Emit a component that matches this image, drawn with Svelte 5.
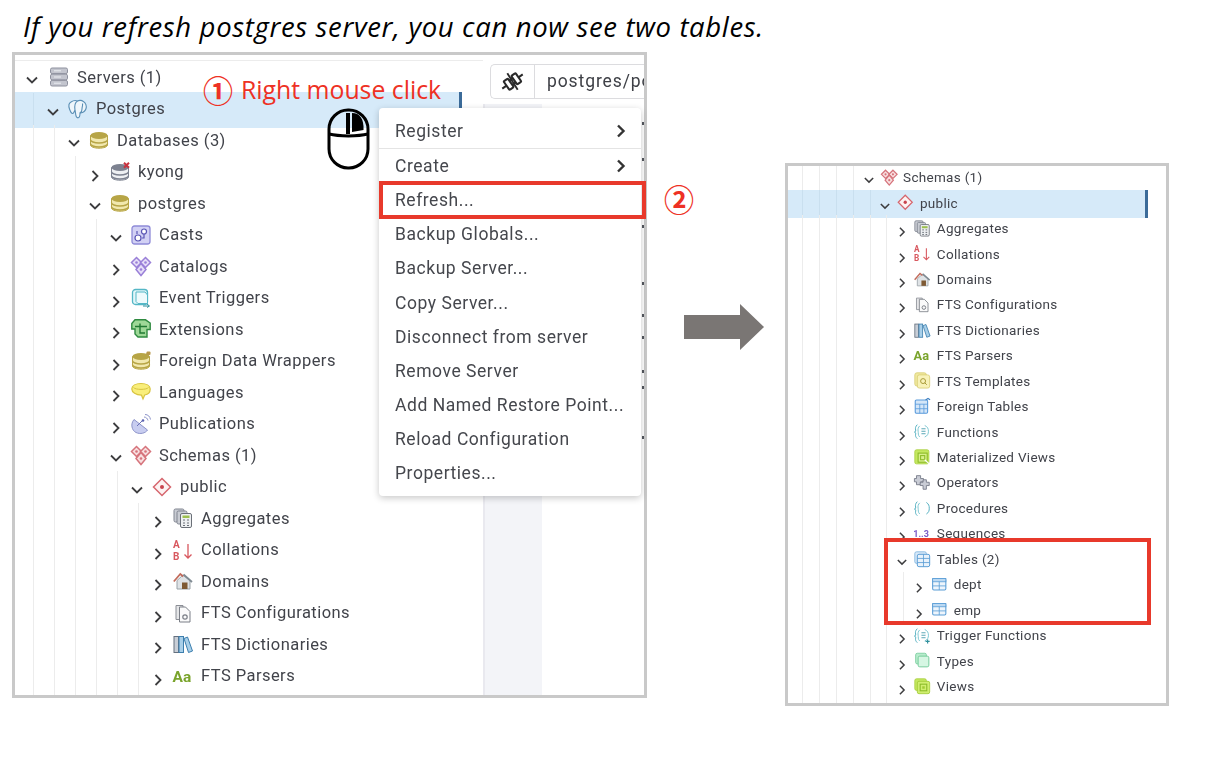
<script>
  const leftRows = [
    [0, true, 'servers', 'Servers (1)'],
    [1, true, 'pg', 'Postgres', true],
    [2, true, 'db', 'Databases (3)'],
    [3, false, 'dbx', 'kyong'],
    [3, true, 'db', 'postgres'],
    [4, true, 'casts', 'Casts'],
    [4, false, 'catalogs', 'Catalogs'],
    [4, false, 'events', 'Event Triggers'],
    [4, false, 'ext', 'Extensions'],
    [4, false, 'fdw', 'Foreign Data Wrappers'],
    [4, false, 'lang', 'Languages'],
    [4, false, 'pub', 'Publications'],
    [4, true, 'schemas', 'Schemas (1)'],
    [5, true, 'public', 'public'],
    [6, false, 'agg', 'Aggregates'],
    [6, false, 'coll', 'Collations'],
    [6, false, 'dom', 'Domains'],
    [6, false, 'conf', 'FTS Configurations'],
    [6, false, 'dict', 'FTS Dictionaries'],
    [6, false, 'parser', 'FTS Parsers'],
    [6, null, '', '']
  ];
  const rightRows = [
    [4, true, 'schemas', 'Schemas (1)'],
    [5, true, 'public', 'public', true],
    [6, false, 'agg', 'Aggregates'],
    [6, false, 'coll', 'Collations'],
    [6, false, 'dom', 'Domains'],
    [6, false, 'conf', 'FTS Configurations'],
    [6, false, 'dict', 'FTS Dictionaries'],
    [6, false, 'parser', 'FTS Parsers'],
    [6, false, 'tmpl', 'FTS Templates'],
    [6, false, 'ftable', 'Foreign Tables'],
    [6, false, 'func', 'Functions'],
    [6, false, 'mview', 'Materialized Views'],
    [6, false, 'ops', 'Operators'],
    [6, false, 'proc', 'Procedures'],
    [6, false, 'seq', 'Sequences'],
    [6, true, 'tables', 'Tables (2)'],
    [7, false, 'table', 'dept'],
    [7, false, 'table', 'emp'],
    [6, false, 'trig', 'Trigger Functions'],
    [6, false, 'types', 'Types'],
    [6, false, 'views', 'Views'],
    [6, null, '', '']
  ];
  const menu = [
    ['Register', true], ['Create', true], ['Refresh...'], ['Backup Globals...'], ['Backup Server...'],
    ['Copy Server...'], ['Disconnect from server'], ['Remove Server'], ['Add Named Restore Point...'],
    ['Reload Configuration'], ['Properties...']
  ];
  const specks = [122, 158, 225, 282, 314, 336, 370, 386, 436];
</script>

{#snippet icon(n)}
  <svg class="ic" viewBox="0 0 20 20" fill="none">
    {#if n === 'servers'}
      <g fill="#c3c5ce" stroke="#8e919e"><rect x="1.500" y="1" width="17" height="5.600" rx="1.600"/><rect x="1.500" y="7.200" width="17" height="5.600" rx="1.600"/><rect x="1.500" y="13.400" width="17" height="5.600" rx="1.600"/></g>
      <path d="M5 3.800h7M5 10h7M5 16.200h7" stroke="#eceef2"/>
    {:else if n === 'pg'}
      <g stroke="#5a8fb5" stroke-width="1.100" stroke-linejoin="round">
        <path d="M3 3C1 4 .5 7 1.500 10c.7 2 1.800 4.500 3 4.500s1.500-2 2.500-3c.5 1 .5 3 .8 4.500.3 1.800 1.200 3 2.500 2.800 1.400-.2 1.700-2.300 1.700-5 2.500.2 5-1.500 6-4 .8-2.500 0-6-3-7.500C14 1.200 11 1 9.500 2 7.500 1.200 4.800 1.800 3 3z" fill="#eef6fb"/>
        <path d="M9.500 2C7 3.500 6.200 6.500 7 11.500M14.500 4.500c.5 2-.5 3.500-.5 5.500s-1 3.500-2 4"/>
      </g>
    {:else if n === 'db' || n === 'dbx' || n === 'fdw'}
      {@const c = n === 'dbx' ? '#7d8290' : '#b7a546'}
      {@const b = n === 'dbx' ? '#eef0f3' : '#f1e8ae'}
      <path d="M1.500 5.500v9.500c0 1.800 3.800 3.200 8.500 3.200s8.500-1.400 8.500-3.200V5.500z" fill={b} stroke={c}/>
      <ellipse cx="10" cy="5.500" rx="8.500" ry="3.400" fill={c}/>
      <path d="M1.500 9.800c0 1.800 3.800 3.200 8.500 3.200s8.500-1.400 8.500-3.200M1.500 13.800c0 1.800 3.800 3.200 8.500 3.200s8.500-1.400 8.500-3.200" stroke={c} stroke-width="1.500"/>
      {#if n === 'dbx'}<path d="M14 .8l5 5M19 .8l-5 5" stroke="#c8333f" stroke-width="2"/>{/if}
      {#if n === 'fdw'}<path d="M13.500 4.500l3-2" stroke="#b7a546" stroke-width="1.500"/><rect x="15.500" y=".5" width="4" height="3.500" rx="1" fill="#b7984a"/>{/if}
    {:else if n === 'casts'}
      <rect x="1" y="1" width="18" height="18" rx="2.500" fill="#d2d1f4" stroke="#8f8bd8" stroke-width="1.300"/>
      <g stroke="#5a55b5" stroke-width="1.200"><circle cx="7" cy="13" r="3" fill="#fff"/><circle cx="13" cy="6.500" r="2.500" fill="#fff"/><path d="M13 9v4h-2M6 6v3"/></g>
    {:else if n === 'catalogs' || n === 'schemas'}
      {@const c = n === 'schemas' ? '#d6747c' : '#9a80d8'}
      {@const f = n === 'schemas' ? '#f8dfe0' : '#e6def8'}
      <g fill={f} stroke={c} stroke-width="1.500"><path d="M5.500 1.500l5 5-5 5-5-5z"/><path d="M14.500 1.500l5 5-5 5-5-5z"/><path d="M10 7.500l5 6-5 6-5-6z"/></g>
      <g fill={c}><circle cx="5.500" cy="6.500" r="1.300"/><circle cx="14.500" cy="6.500" r="1.300"/><circle cx="10" cy="13.500" r="1.300"/></g>
    {:else if n === 'public'}
      <path d="M10 1.500l8.500 8.500-8.500 8.500-8.500-8.500z" fill="#fdf2f2" stroke="#d6666e" stroke-width="1.500"/><circle cx="10" cy="10" r="2" fill="#c8444e"/>
    {:else if n === 'events'}
      <rect x="1.500" y="1.500" width="15" height="15" rx="3" fill="#e2f6f9" stroke="#55b7c6" stroke-width="1.300"/>
      <path d="M5 4h9l2.500 3v8.500H7l-2-2z" fill="#eefafc" stroke="#55b7c6"/><path d="M12 18h6M16 16l2.500 2-2.500 1.500" stroke="#2f8f9c"/>
    {:else if n === 'ext'}
      <path d="M4 .8h10.500l4.700 3.200v6.500H16v7.500H7l-3-3V10H.8V4.500z" fill="#9ed897" stroke="#2f8a40" stroke-width="1.400"/><path d="M4 7.500h12M9 4.500v9.500h5" stroke="#217a33" stroke-width="1.400"/>
    {:else if n === 'lang'}
      <path d="M.8 7c0-3.500 4-5.500 9.200-5.500S19.200 3.500 19.200 7s-2.500 5.500-5.500 6L12 17l-1.500-3.800C5 13 .8 10.500.8 7z" fill="#f9ee7a" stroke="#d8c440" stroke-width="1.200"/><path d="M2.500 5.500c2 2.500 13 2.500 15 0" stroke="#d8c440"/>
    {:else if n === 'pub'}
      <path d="M3 5.500C-.8 10 .8 16.500 5 18.500s9.500.8 11.500-2.500z" fill="#c8cdf0" stroke="#8b92c8"/><path d="M6 12l5-5" stroke="#6b72b8"/><circle cx="12" cy="6.500" r="1.300" fill="#5a62b0"/>
      <path d="M13 3c2 0 3.500 1.500 4 3.500M14 .5c3 0 5 2 5.500 5" stroke="#8b92c8"/>
    {:else if n === 'agg'}
      <g stroke="#808590" fill="#c9ccd3"><rect x="1" y="1" width="10" height="13" rx="1.500"/><rect x="4" y="3" width="10" height="13" rx="1.500"/></g>
      <rect x="7.500" y="5.500" width="11" height="14" rx="1.500" fill="#eef0f2" stroke="#6b7078"/><rect x="9.500" y="7.500" width="7" height="2.500" fill="#9cc04f"/><path d="M10 12h2M14 12h2M10 15h2M14 15h2M10 17.500h2M14 17.500h2" stroke="#6b7078" stroke-width="1.200"/>
    {:else if n === 'coll'}
      <text x="0" y="8" class="itx" fill="#d8585f">A</text><text x="0" y="19.500" class="itx" fill="#d8585f">B</text>
      <path d="M15 4v14M11.500 14.500l3.500 3.500 3.500-3.500" stroke="#d8585f" stroke-width="1.300"/>
    {:else if n === 'dom'}
      <path d="M4 9.500V18h13V9.500L10 4z" fill="#dfe3e6" stroke="#9aa2a8"/><path d="M.8 10.500l6.500-7.500 3 2.500" stroke="#c26c5c" stroke-width="1.800"/><path d="M10.500 3.500l8.500 7.500" stroke="#7f8a92" stroke-width="1.800"/><rect x="9" y="11.500" width="5.500" height="6.500" fill="#7e5a34"/>
    {:else if n === 'conf'}
      <path d="M3 2.500h7v14H3z" fill="#e5e6e8" stroke="#8c8f96"/><path d="M6.500 4h6l4.500 4.500V19h-10.500z" fill="#fafafa" stroke="#7b7f87"/><circle cx="12" cy="14" r="2.200" stroke="#7b7f87" stroke-width="1.200"/>
    {:else if n === 'dict'}
      <rect x="1" y="2.500" width="4.500" height="16" fill="#c9ced6" stroke="#65707e"/><rect x="6" y="2.500" width="4.500" height="16" fill="#a8cfe9" stroke="#3d7fae"/><path d="M11 4.500l3.500-1.500 5 14-4 1.500z" fill="#a8cfe9" stroke="#3d7fae"/>
    {:else if n === 'parser'}
      <text x="-.5" y="15.500" class="aa">Aa</text>
    {:else if n === 'tmpl'}
      <rect x="1" y="1" width="14" height="16" rx="2.500" fill="#f0e9a0" stroke="#d8cd72"/><rect x="4" y="3.500" width="15" height="16" rx="2.500" fill="#f8f2b8" stroke="#d8cd72"/><circle cx="11" cy="11" r="3" stroke="#a89a38" stroke-width="1.200"/><path d="M13 13l2.500 2.500" stroke="#a89a38" stroke-width="1.200"/>
    {:else if n === 'ftable'}
      <rect x="1.500" y="2.500" width="15" height="16" rx="1.500" fill="#d4e6f8" stroke="#5a9bdc" stroke-width="1.300"/><path d="M1.500 7.500h15M1.500 13h15M7 7.500v11M12 7.500v11" stroke="#5a9bdc"/><path d="M14 2.500l3-2 2.500 1.500" stroke="#3d7fc0" stroke-width="1.400"/>
    {:else if n === 'func' || n === 'proc' || n === 'trig'}
      <path d="M4 2C1.500 4.500 1.500 6.500 2 8.500S1 11 .5 11c.5 0 2 .5 1.500 2.500S2 17 4 19" stroke="#54afc0" stroke-width="1.200"/>
      <path d="M7 3.500C5 5 4.500 8 5 10s-.5 5 2 7" stroke="#7cc7d2" stroke-width="1.200"/>
      {#if n === 'proc'}
        <path d="M15 3c3 2 3.500 4 3.500 7s-.5 5-3.500 7" stroke="#54afc0" stroke-width="1.200"/>
      {:else}
        <path d="M9 7h5M9 10h5M9 13h5" stroke="#4a9fb0" stroke-width="1.100"/><path d="M13 3c3.500 1.500 4.500 4 4.500 7s-1 5.500-4.500 7" stroke="#7cc7d2" stroke-width="1.200"/>
        {#if n === 'trig'}<path d="M14 17.500h5M16.500 15v5" stroke="#2f8f9c" stroke-width="1.400"/>{/if}
      {/if}
    {:else if n === 'mview'}
      <rect x="1" y="1" width="17" height="17" rx="2" fill="#c4e860" stroke="#a6cf3a"/><rect x="5" y="5" width="11" height="11" fill="#d8f08c" stroke="#8cba28" stroke-width="1.300"/><rect x="8" y="8" width="5" height="5" stroke="#8cba28" stroke-width="1.300"/><path d="M13 13l5.500 5" stroke="#fff" stroke-width="1.500"/>
    {:else if n === 'ops'}
      <g fill="#c9ccd5" stroke="#6e7382"><path d="M3 5.500V2h5v3.500h3.500v4H8V13H3V9.500H.5v-4z"/><path d="M11 10V7h4v3h3.500v4H15v4.500h-4V14H7.500v-4z"/></g>
    {:else if n === 'seq'}
      <text x="-1" y="15" class="sq">1..3</text>
    {:else if n === 'tables'}
      <rect x="1" y="1" width="14" height="14" rx="2" fill="#d8e9f8" stroke="#7cb2de"/><rect x="4" y="4" width="15" height="15" rx="2" fill="#e8f2fb" stroke="#5b9ed6" stroke-width="1.200"/><path d="M4 9h15M4 14h15M11.500 4v15" stroke="#5b9ed6"/>
    {:else if n === 'table'}
      <rect x="2" y="3" width="16" height="14" rx="1.500" fill="#eef5fc" stroke="#5b9ed6" stroke-width="1.300"/><rect x="2" y="3" width="16" height="4" fill="#bcd9f2" stroke="#5b9ed6"/><path d="M2 12h16M10 7v10" stroke="#5b9ed6"/>
    {:else if n === 'types'}
      <rect x="2" y="1.500" width="13" height="13" rx="2" fill="#b8eccd" stroke="#76cc9c"/><rect x="5" y="5" width="13" height="13" rx="2" fill="#d6f6e3" stroke="#76cc9c" stroke-width="1.200"/>
    {:else if n === 'views'}
      <rect x="1" y="1" width="14" height="14" rx="2" fill="#c4e860" stroke="#a6cf3a"/><rect x="4" y="4" width="15" height="15" rx="2" fill="#d0ee70" stroke="#a0ca34"/><rect x="7.500" y="7.500" width="8" height="8" stroke="#8cba28" stroke-width="1.300"/><rect x="10" y="10" width="3" height="3" fill="#a0ca34"/>
    {/if}
  </svg>
{/snippet}

{#snippet chevron(open)}
  <svg class="chev" class:open viewBox="0 0 12 12" fill="none">
    {#if open}<path d="M1 3.500l5 5 5-5"/>{:else}<path d="M3.500 1l5 5-5 5"/>{/if}
  </svg>
{/snippet}

{#snippet tree(rows)}
  <div class="rows">
    {#each rows as [level, open, ic, label, selected]}
      <div class="row" class:sel={selected} class:root={level === 0}>
        {#each Array(level) as _}<span class="guide"></span>{/each}
        {#if open !== null}
          <span class="caret">{@render chevron(open)}</span>
          <span class="icon">{@render icon(ic)}</span>
          <span class="label">{label}</span>
        {/if}
      </div>
    {/each}
  </div>
{/snippet}

<div class="slide">
  <p class="title">If you refresh postgres server, you can now see two tables.</p>

  <div class="stage">
    <section class="panel left">
      <div class="split">
        <div class="treecol">{@render tree(leftRows)}</div>
        <div class="work">
          <div class="toolbar">
            <span class="conn">
              <svg viewBox="0 0 24 24" width="25" height="25" fill="none" stroke="#2a2a2a" stroke-width="2">
                <g transform="rotate(-35 12 12)"><path d="M0 12h5M19 12h5"/><rect x="5" y="7" width="5" height="10" rx="1"/><rect x="14" y="7" width="5" height="10" rx="1"/><path d="M10 9.500h4M10 14.500h4"/></g>
                <path d="M7 4l10 16" stroke-width="1.800"/>
              </svg>
            </span>
            <span class="conn-name">postgres/postgres</span>
          </div>
          <div class="strip"></div>
          {#each specks as y}<i class="speck" style="top:{y - 55}px"></i>{/each}
        </div>
      </div>

      <div class="menu">
        {#each menu as [label, sub], i}
          <div class="item" class:sep={i === 1}>
            <span>{label}</span>
            {#if sub}<svg class="sub" viewBox="0 0 10 14" fill="none"><path d="M2 1.500l5.500 5.500-5.500 5.500"/></svg>{/if}
          </div>
        {/each}
      </div>

      <div class="note one"><span class="num">①</span><span>Right mouse click</span></div>
      <svg class="mouse" viewBox="0 0 44 62" fill="none" stroke="#000" stroke-width="3">
        <rect x="2" y="2" width="39" height="58" rx="19"/>
        <path d="M2 26c10 2.500 29 2.500 39 0"/>
        <path d="M21 5v21" stroke-width="4"/>
        <path d="M25 5c8 0 12 6 11.500 17L25 24z" fill="#000" stroke="none"/>
      </svg>
      <div class="redbox refresh"></div>
      <span class="num two">②</span>
    </section>

    <svg class="arrow" viewBox="0 0 80 46"><path d="M0 11h56V0l24 23-24 23V35H0z" fill="#7a7674"/></svg>

    <section class="panel right">
      <div class="treecol">{@render tree(rightRows)}</div>
      <div class="redbox tables"></div>
    </section>
  </div>
</div>

<style>
  :global(body) { margin: 0; background: #fff; }

  .slide { width: 1208px; height: 766px; overflow: hidden; font-family: Roboto, sans-serif; }
  .title {
    margin: 0; padding: 9px 0 0 23px; height: 52px; box-sizing: border-box;
    font: italic 27.500px "Open Sans", sans-serif; letter-spacing: .65px; line-height: 36px; color: #000; white-space: nowrap;
  }
  .stage { display: flex; align-items: flex-start; padding-left: 12px; }

  .panel { position: relative; box-sizing: border-box; border: 3px solid #c9c9c9; background: #fff; flex: none; }
  .panel.left {
    width: 635px; height: 646px;
    --h: 31.500px; --g: 21px; --pad: 18px; --icon: 20px; --fs: 16.500px; --ls: .45px;
    --cw: 12px; --cl: -7px; --il: 9px; --tl: 8px; --gap-r: 21px; --hi-top: -1px;
  }
  .panel.right {
    width: 384px; height: 543px; margin: 111px 0 0 21px;
    --h: 25.450px; --g: 16.900px; --pad: 14px; --icon: 16.500px; --fs: 13.500px; --ls: .3px;
    --cw: 10px; --cl: -6px; --il: 7px; --tl: 6px; --gap-r: 18px; --hi-top: 0px;
  }
  .panel.right .treecol { height: 100%; overflow: hidden; }
  .panel.right .rows { margin-top: -1.500px; }

  .split { display: flex; height: 100%; overflow: hidden; }
  .panel.left .treecol { width: 468px; flex: none; padding-top: 6.500px; box-sizing: border-box; background: linear-gradient(#ececec, #ececec) 0 5px / 100% 1px no-repeat; }

  .rows { position: relative; isolation: isolate; margin-right: var(--gap-r); filter: blur(.4px); }
  .row { position: relative; display: flex; align-items: center; height: var(--h); padding-left: var(--pad); white-space: nowrap; color: #41434a; font-size: var(--fs); letter-spacing: var(--ls); }
  .row.sel::before { content: ""; position: absolute; inset: var(--hi-top) 0 -3px 0; background: #d6eaf9; z-index: -1; }
  .row.sel::after { content: ""; position: absolute; top: var(--hi-top); bottom: -3px; right: 0; width: 3px; background: #3b6b99; }
  .guide { flex: none; align-self: stretch; width: var(--g); box-sizing: border-box; border-left: 1px solid #ececec; }
  .row.sel .guide { border-left-color: #c9dfef; }

  .caret { flex: none; display: flex; justify-content: center; width: var(--cw); margin-left: var(--cl); }
  .icon { flex: none; display: flex; width: var(--icon); height: var(--icon); margin-left: var(--il); }
  .label { margin-left: var(--tl); }
  .row.root .icon { margin-left: calc(var(--il) + 2px); }

  .chev { width: var(--cw); height: var(--cw); stroke: #3d3d3f; stroke-width: 1.800; transform: translateY(4px); }
  .chev.open { transform: translateY(3px); }
  .ic { width: 100%; height: 100%; overflow: visible; }
  .itx { font: 700 10px Roboto, sans-serif; }
  .aa { font: 700 15.500px Roboto, sans-serif; fill: #7aa42c; letter-spacing: 0; }
  .sq { font: 700 11px Roboto, sans-serif; fill: #7a5cc8; letter-spacing: 0; }

  .work { position: relative; flex: 1; min-width: 0; display: flex; flex-direction: column; overflow: hidden; }
  .toolbar { flex: none; display: flex; height: 35px; margin: 9px 0 5px 7px; box-sizing: border-box; border: 1px solid #dcdcdf; border-right: 0; border-radius: 5px 0 0 5px; overflow: hidden; filter: blur(.3px); }
  .conn { flex: none; display: flex; align-items: center; justify-content: center; width: 43px; border-right: 1px solid #dcdcdf; }
  .conn-name { padding-left: 12px; line-height: 33px; font-size: 17.500px; letter-spacing: .9px; color: #3e4046; white-space: nowrap; }
  .strip { flex: 1; width: 59px; box-sizing: border-box; background: #f3f4f8; border-left: 2px solid #e9e9ef; }
  .speck { position: absolute; right: 0; width: 2px; height: 3px; background: #55585f; }

  .menu {
    position: absolute; left: 364px; top: 53px; width: 262px; box-sizing: border-box; padding: 5.500px 0 5.500px;
    background: #fff; border-radius: 4px; box-shadow: 0 2px 7px rgba(0, 0, 0, .22);
    font-size: 17.500px; letter-spacing: .55px; color: #45474d;
  }
  .item { display: flex; align-items: center; justify-content: space-between; height: 34.200px; padding: 0 16px 0 16px; white-space: nowrap; }
  .item span { filter: blur(.4px); }
  .item.sep { border-top: 1px solid #e4e4e4; }
  .sub { width: 10px; height: 14px; stroke: #333; stroke-width: 2.400; margin-right: -1px; }

  .note { position: absolute; display: flex; align-items: center; gap: 8px; font: 24.800px "Open Sans", sans-serif; color: #ee3124; white-space: nowrap; }
  .note.one { left: 188px; top: 16px; }
  .num { font: 700 30px "Noto Sans CJK KR", sans-serif; color: #ee3124; line-height: 36px; }
  .num.two { position: absolute; left: 649px; top: 125px; }

  .mouse { position: absolute; left: 312px; top: 53px; width: 44px; height: 62px; }

  .redbox { position: absolute; box-sizing: border-box; border: 4px solid #e8392b; }
  .redbox.refresh { left: 364px; top: 126px; width: 267px; height: 38px; }
  .redbox.tables { left: 96px; top: 372px; width: 267px; height: 87px; }

  .arrow { flex: none; width: 80px; height: 46px; margin: 252px 0 0 37px; }
</style>
